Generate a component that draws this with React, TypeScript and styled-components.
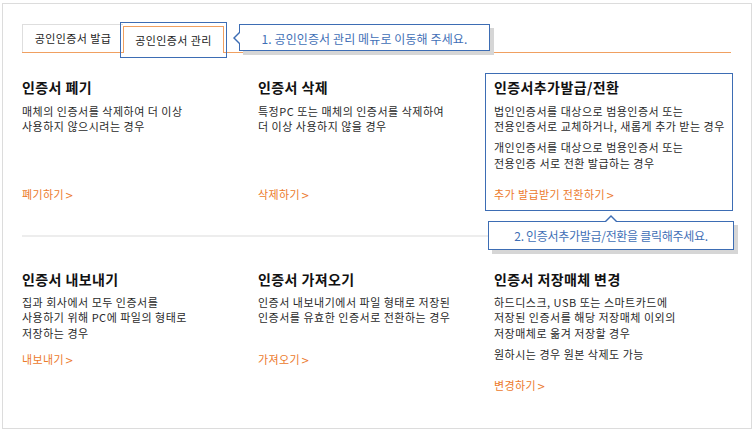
import React from "react";
import styled, { createGlobalStyle } from "styled-components";

const Global = createGlobalStyle`
  html, body { margin: 0; padding: 0; background: #fff; }
  body {
    font-family: "Noto Sans CJK KR", "Noto Sans", sans-serif;
    color: #333;
    -webkit-font-smoothing: antialiased;
  }
`;

const BLUE = "#3d6db4";
const ORANGE = "#ec7a2c";

const Frame = styled.div`
  box-sizing: border-box;
  width: 750px;
  height: 426px;
  margin: 3px 0 0 2px;
  border: 1px solid #dcdcdc;
  padding: 20px 0 0 19px;
`;

const TabBar = styled.div`
  position: relative;
  display: flex;
  align-items: flex-end;
  width: 709px;
  height: 28px;
  border-bottom: 1px solid #f0a061;
`;

const Tab = styled.div<{ $active?: boolean }>`
  position: relative;
  box-sizing: border-box;
  width: 101px;
  height: ${(p) => (p.$active ? 27 : 28)}px;
  margin-bottom: ${(p) => (p.$active ? -1 : 0)}px;
  display: flex;
  align-items: center;
  justify-content: center;
  font-size: 11px;
  letter-spacing: 0.4px;
  color: #222;
  background: #fff;
  border: 1px solid ${(p) => (p.$active ? "#f0a061" : "#dedede")};
  border-bottom: none;
  border-right: ${(p) => (p.$active ? "1px solid #f0a061" : "none")};
  padding-bottom: ${(p) => (p.$active ? 0 : 1)}px;

  ${(p) =>
    p.$active &&
    `
    &::after {
      content: "";
      position: absolute;
      top: -5px;
      left: -4px;
      right: -4px;
      bottom: -5px;
      border: 1px solid ${BLUE};
    }
  `}
`;

const Callout = styled.div<{ $dir: "left" | "up" }>`
  position: absolute;
  box-sizing: border-box;
  display: flex;
  align-items: center;
  justify-content: center;
  background: #fff;
  border: 1px solid ${BLUE};
  box-shadow: 4px 4px 0 #d6d6d6;
  color: #3f6fb6;
  font-size: 12px;
  white-space: nowrap;
  z-index: 2;

  &::before,
  &::after {
    content: "";
    position: absolute;
    width: 0;
    height: 0;
    border-style: solid;
  }

  ${(p) =>
    p.$dir === "left"
      ? `
    &::before {
      left: -7px; top: 50%; margin-top: -7px;
      border-width: 7px 7px 7px 0;
      border-color: transparent ${BLUE} transparent transparent;
    }
    &::after {
      left: -5px; top: 50%; margin-top: -6px;
      border-width: 6px 6px 6px 0;
      border-color: transparent #fff transparent transparent;
    }
  `
      : `
    &::before {
      top: -7px; left: 50%; margin-left: -7px;
      border-width: 0 7px 7px 7px;
      border-color: transparent transparent ${BLUE} transparent;
    }
    &::after {
      top: -5px; left: 50%; margin-left: -6px;
      border-width: 0 6px 6px 6px;
      border-color: transparent transparent #fff transparent;
    }
  `}
`;

const TabCallout = styled(Callout)`
  left: 217px;
  top: 0px;
  width: 251px;
  height: 27px;
  padding-top: 1px;
  letter-spacing: 0.1px;
`;

const CardCallout = styled(Callout)`
  left: 2px;
  top: 147px;
  width: 246px;
  height: 29px;
  letter-spacing: -0.3px;
`;

const Row = styled.div<{ $top: number; $align: string }>`
  display: grid;
  grid-template-columns: 236px 236px 239px;
  align-items: ${(p) => p.$align};
  margin-top: ${(p) => p.$top}px;
`;

const Card = styled.div<{ $highlight?: boolean }>`
  position: relative;
  box-sizing: border-box;
  display: flex;
  flex-direction: column;
  margin-left: -9px;
  padding: 4px 8px 6px 8px;
  border: 1px solid ${(p) => (p.$highlight ? BLUE : "transparent")};
`;

const Title = styled.h3`
  margin: 0;
  font-size: 14px;
  line-height: 18px;
  font-weight: 700;
  color: #111;
  letter-spacing: 0.4px;
  white-space: nowrap;
`;

const Desc = styled.p<{ $gap: number; $minLines?: number }>`
  margin: ${(p) => p.$gap}px 0 0 0;
  font-size: 11px;
  line-height: 15.5px;
  letter-spacing: 0.5px;
  color: #2a2a2a;
  white-space: nowrap;
  min-height: ${(p) => (p.$minLines ? p.$minLines * 15.5 : 0)}px;
`;

const Action = styled.a<{ $gap: number }>`
  margin-top: auto;
  padding-top: ${(p) => p.$gap}px;
  font-size: 11px;
  line-height: 16px;
  letter-spacing: 0.4px;
  color: ${ORANGE};
  text-decoration: none;
  white-space: nowrap;
  cursor: pointer;
`;

const Chevron = styled.span`
  margin-left: 1px;
  font-family: "DejaVu Sans", sans-serif;
  font-size: 10px;
`;

const Divider = styled.hr`
  width: 709px;
  height: 2px;
  margin: 24px 0 0 0;
  border: none;
  background: #ededed;
`;

function Link({ gap, children }: { gap: number; children: React.ReactNode }) {
  return (
    <Action $gap={gap}>
      {children}
      <Chevron>&gt;</Chevron>
    </Action>
  );
}

export default function App() {
  return (
    <>
      <Global />
      <Frame>
        <TabBar>
          <Tab>공인인증서 발급</Tab>
          <Tab $active>공인인증서 관리</Tab>
          <TabCallout $dir="left">1. 공인인증서 관리 메뉴로 이동해 주세요.</TabCallout>
        </TabBar>

        <Row $top={20} $align="stretch">
          <Card>
            <Title>인증서 폐기</Title>
            <Desc $gap={7.5}>
              매체의 인증서를 삭제하여 더 이상
              <br />
              사용하지 않으시려는 경우
            </Desc>
            <Link gap={15}>폐기하기</Link>
          </Card>
          <Card>
            <Title>인증서 삭제</Title>
            <Desc $gap={7.5}>
              특정PC 또는 매체의 인증서를 삭제하여
              <br />
              더 이상 사용하지 않을 경우
            </Desc>
            <Link gap={15}>삭제하기</Link>
          </Card>
          <Card $highlight>
            <Title>인증서추가발급/전환</Title>
            <Desc $gap={7.5}>
              법인인증서를 대상으로 범용인증서 또는
              <br />
              전용인증서로 교체하거나, 새롭게 추가 받는 경우
            </Desc>
            <Desc $gap={5.5}>
              개인인증서를 대상으로 범용인증서 또는
              <br />
              전용인증 서로 전환 발급하는 경우
            </Desc>
            <Link gap={15}>추가 발급받기 전환하기</Link>
            <CardCallout $dir="up">2. 인증서추가발급/전환을 클릭해주세요.</CardCallout>
          </Card>
        </Row>

        <Divider />

        <Row $top={28} $align="start">
          <Card>
            <Title>인증서 내보내기</Title>
            <Desc $gap={6.5} $minLines={3}>
              집과 회사에서 모두 인증서를
              <br />
              사용하기 위해 PC에 파일의 형태로
              <br />
              저장하는 경우
            </Desc>
            <Link gap={10}>내보내기</Link>
          </Card>
          <Card>
            <Title>인증서 가져오기</Title>
            <Desc $gap={6.5} $minLines={3}>
              인증서 내보내기에서 파일 형태로 저장된
              <br />
              인증서를 유효한 인증서로 전환하는 경우
            </Desc>
            <Link gap={10}>가져오기</Link>
          </Card>
          <Card>
            <Title>인증서 저장매체 변경</Title>
            <Desc $gap={6.5}>
              하드디스크, USB 또는 스마트카드에
              <br />
              저장된 인증서를 해당 저장매체 이외의
              <br />
              저장매체로 옮겨 저장할 경우
            </Desc>
            <Desc $gap={6}>원하시는 경우 원본 삭제도 가능</Desc>
            <Link gap={14}>변경하기</Link>
          </Card>
        </Row>
      </Frame>
    </>
  );
}
